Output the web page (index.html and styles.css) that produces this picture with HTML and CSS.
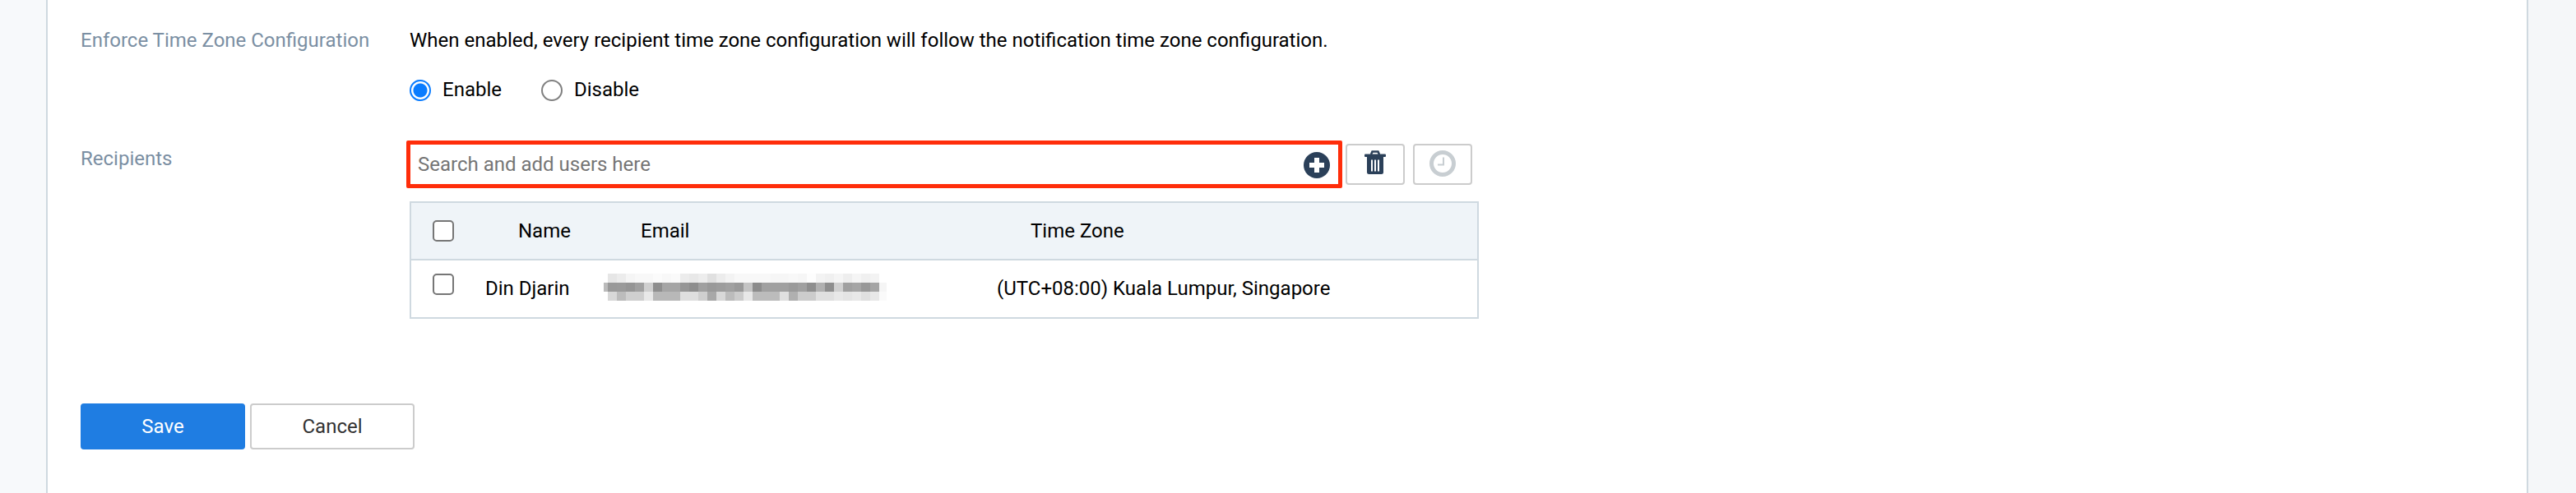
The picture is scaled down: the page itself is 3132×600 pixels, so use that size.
FILE: index.html
```html
<!DOCTYPE html>
<html lang="en">
<head>
  <meta charset="UTF-8">
  <title>Notification Recipients</title>
  <link rel="stylesheet" href="styles.css">
</head>
<body>
  <div class="side side-left"></div>
  <main class="panel">
    <div class="form-row tz-row">
      <div class="form-label">Enforce Time Zone Configuration</div>
      <div class="form-field">
        <p class="hint">When enabled, every recipient time zone configuration will follow the notification time zone configuration.</p>
        <div class="radios">
          <label class="radio-item"><input type="radio" name="enforce" checked> Enable</label>
          <label class="radio-item"><input type="radio" name="enforce"> Disable</label>
        </div>
      </div>
    </div>

    <div class="form-row recipients-row">
      <div class="form-label recipients-label">Recipients</div>
      <div class="form-field">
        <div class="search-row">
          <div class="search-box">
            <input class="search-input" type="text" placeholder="Search and add users here">
            <svg class="plus-icon" width="32" height="32" viewBox="0 0 32 32">
              <circle cx="16" cy="16" r="16" fill="#2b4059"/>
              <path d="M13 7h6v6h6v6h-6v6h-6v-6H7v-6h6z" fill="#fff"/>
            </svg>
          </div>
          <button class="icon-btn" type="button">
            <svg class="trash-icon" width="26" height="29" viewBox="0 0 26 29">
              <path d="M8 5l1.5-3.5h7L18 5" fill="none" stroke="#2b4059" stroke-width="2.6"/>
              <rect y="4.5" width="26" height="3.5" rx="1" fill="#2b4059"/>
              <path d="M3 8h20v18.500a2.500 2.500 0 0 1-2.500 2.500h-15A2.500 2.500 0 0 1 3 26.500z" fill="#2b4059"/>
              <path d="M8 11.500h2v14H8zM12 11.500h2v14h-2zM16 11.500h2v14h-2z" fill="#fff"/>
            </svg>
          </button>
          <button class="icon-btn" type="button">
            <svg class="clock-icon" width="32" height="32" viewBox="0 0 32 32">
              <circle cx="16" cy="16" r="13.500" fill="none" stroke="#c8ced2" stroke-width="5"/>
              <path d="M17 8.500v9h-7" fill="none" stroke="#c8ced2" stroke-width="2"/>
            </svg>
          </button>
        </div>

        <table class="recipients">
          <thead>
            <tr>
              <th class="col-check"><input type="checkbox"></th>
              <th class="col-name">Name</th>
              <th class="col-email">Email</th>
              <th class="col-zone">Time Zone</th>
            </tr>
          </thead>
          <tbody>
            <tr>
              <td class="col-check"><input type="checkbox"></td>
              <td class="col-name">Din Djarin</td>
              <td class="col-email">
                <!-- redacted address -->
                <svg class="redacted" width="344" height="33" viewBox="0 0 344 33" shape-rendering="crispEdges">
                  <g>
                    <rect x="5" width="11" height="11" fill="#e6e6e6"/><rect x="16" width="11" height="11" fill="#ececec"/><rect x="27" width="11" height="11" fill="#f5f5f5"/><rect x="38" width="22" height="11" fill="#f8f8f8"/><rect x="60" width="11" height="11" fill="#fbfbfb"/><rect x="71" width="11" height="11" fill="#f8f8f8"/><rect x="82" width="11" height="11" fill="#fafafa"/><rect x="93" width="11" height="11" fill="#ececec"/><rect x="104" width="11" height="11" fill="#e8e8e8"/><rect x="115" width="11" height="11" fill="#ededed"/><rect x="126" width="11" height="11" fill="#e0e0e0"/><rect x="137" width="11" height="11" fill="#ececec"/><rect x="148" width="11" height="11" fill="#f3f3f3"/><rect x="159" width="22" height="11" fill="#f8f8f8"/><rect x="181" width="22" height="11" fill="#f8f8f8"/><rect x="203" width="22" height="11" fill="#f6f6f6"/><rect x="225" width="11" height="11" fill="#f8f8f8"/><rect x="236" width="11" height="11" fill="#f6f6f6"/><rect x="247" width="11" height="11" fill="#fdfdfd"/><rect x="258" width="11" height="11" fill="#f3f3f3"/><rect x="269" width="11" height="11" fill="#f0f0f0"/><rect x="280" width="11" height="11" fill="#f5f5f5"/><rect x="291" width="11" height="11" fill="#eeeeee"/><rect x="302" width="11" height="11" fill="#f5f5f5"/><rect x="313" width="11" height="11" fill="#f0f0f0"/><rect x="324" width="11" height="11" fill="#f3f3f3"/>
                  </g>
                  <g>
                    <rect y="11" width="5" height="11" fill="#bbbbbb"/><rect x="5" y="11" width="11" height="11" fill="#999999"/><rect x="16" y="11" width="11" height="11" fill="#9a9a9a"/><rect x="27" y="11" width="11" height="11" fill="#959595"/><rect x="38" y="11" width="11" height="11" fill="#a0a0a0"/><rect x="49" y="11" width="11" height="11" fill="#cfcfcf"/><rect x="60" y="11" width="11" height="11" fill="#8e8e8e"/><rect x="71" y="11" width="22" height="11" fill="#a5a5a5"/><rect x="93" y="11" width="11" height="11" fill="#969696"/><rect x="104" y="11" width="11" height="11" fill="#8e8e8e"/><rect x="115" y="11" width="11" height="11" fill="#a0a0a0"/><rect x="126" y="11" width="11" height="11" fill="#999999"/><rect x="137" y="11" width="11" height="11" fill="#9c9c9c"/><rect x="148" y="11" width="11" height="11" fill="#a0a0a0"/><rect x="159" y="11" width="11" height="11" fill="#999999"/><rect x="170" y="11" width="11" height="11" fill="#c4c4c4"/><rect x="181" y="11" width="11" height="11" fill="#8c8c8c"/><rect x="192" y="11" width="33" height="11" fill="#a0a0a0"/><rect x="225" y="11" width="11" height="11" fill="#9a9a9a"/><rect x="236" y="11" width="11" height="11" fill="#a0a0a0"/><rect x="247" y="11" width="11" height="11" fill="#8e8e8e"/><rect x="258" y="11" width="11" height="11" fill="#b0b0b0"/><rect x="269" y="11" width="11" height="11" fill="#8e8e8e"/><rect x="280" y="11" width="11" height="11" fill="#d0d0d0"/><rect x="291" y="11" width="11" height="11" fill="#a0a0a0"/><rect x="302" y="11" width="11" height="11" fill="#a5a5a5"/><rect x="313" y="11" width="11" height="11" fill="#989898"/><rect x="324" y="11" width="11" height="11" fill="#a5a5a5"/><rect x="335" y="11" width="9" height="11" fill="#f5f5f5"/>
                  </g>
                  <g>
                    <rect x="5" y="22" width="11" height="11" fill="#d8d8d8"/><rect x="16" y="22" width="11" height="11" fill="#bcbcbc"/><rect x="27" y="22" width="22" height="11" fill="#cfcfcf"/><rect x="49" y="22" width="11" height="11" fill="#e8e8e8"/><rect x="60" y="22" width="33" height="11" fill="#b8b8b8"/><rect x="93" y="22" width="22" height="11" fill="#dfdfdf"/><rect x="115" y="22" width="11" height="11" fill="#cfcfcf"/><rect x="126" y="22" width="11" height="11" fill="#a8a8a8"/><rect x="137" y="22" width="11" height="11" fill="#d8d8d8"/><rect x="148" y="22" width="11" height="11" fill="#bcbcbc"/><rect x="159" y="22" width="11" height="11" fill="#cccccc"/><rect x="170" y="22" width="11" height="11" fill="#e8e8e8"/><rect x="181" y="22" width="33" height="11" fill="#bcbcbc"/><rect x="214" y="22" width="11" height="11" fill="#e0e0e0"/><rect x="225" y="22" width="11" height="11" fill="#b0b0b0"/><rect x="236" y="22" width="22" height="11" fill="#cccccc"/><rect x="258" y="22" width="22" height="11" fill="#e0e0e0"/><rect x="280" y="22" width="11" height="11" fill="#e8e8e8"/><rect x="291" y="22" width="11" height="11" fill="#e4e4e4"/><rect x="302" y="22" width="11" height="11" fill="#e8e8e8"/><rect x="313" y="22" width="11" height="11" fill="#e0e0e0"/><rect x="324" y="22" width="11" height="11" fill="#e8e8e8"/><rect x="335" y="22" width="9" height="11" fill="#fafafa"/>
                  </g>
                </svg>
              </td>
              <td class="col-zone">(UTC+08:00) Kuala Lumpur, Singapore</td>
            </tr>
          </tbody>
        </table>
      </div>
    </div>

    <div class="actions">
      <button class="btn btn-primary" type="button">Save</button>
      <button class="btn" type="button">Cancel</button>
    </div>
  </main>
  <div class="side side-right"></div>
</body>
</html>
```

FILE: styles.css
```css
html, body {
  margin: 0;
  height: 600px;
  overflow: hidden;
}
body {
  display: flex;
  font-family: Roboto, "Liberation Sans", sans-serif;
  font-size: 24px;
  color: #000;
  background: #f7f9fb;
}
.side-left {
  width: 56px;
}
.side-right {
  flex: 1;
  background: #f5f7f9;
}
.panel {
  box-sizing: border-box;
  width: 3018px;
  height: 600px;
  padding: 33px 0 0 40px;
  background: #fff;
  border-left: 2px solid #cfd9e0;
  border-right: 2px solid #cfd9e0;
}
.form-row {
  display: flex;
}
.form-label {
  width: 400px;
  flex: none;
  line-height: 32px;
  color: #7b8fa3;
}
.hint {
  margin: 0;
  line-height: 32px;
}
.radios {
  display: flex;
  gap: 34px;
  margin-top: 28px;
  height: 32px;
}
.radio-item {
  display: flex;
  align-items: center;
  gap: 14px;
  width: 126px;
}
input[type="radio"] {
  appearance: none;
  box-sizing: border-box;
  flex: none;
  width: 26px;
  height: 26px;
  margin: 2px 0 0;
  border: 2px solid #808080;
  border-radius: 50%;
  background: #fff;
}
input[type="radio"]:checked {
  border-color: #0a7cff;
  background: radial-gradient(circle, #0a7cff 0 8px, #fff 9px);
}
input[type="checkbox"] {
  appearance: none;
  display: block;
  box-sizing: border-box;
  width: 26px;
  height: 26px;
  margin: 0;
  border: 2px solid #767676;
  border-radius: 5px;
  background: #fff;
}
.recipients-row {
  margin-top: 46px;
}
.recipients-label {
  margin-top: 6px;
}
.search-row {
  display: flex;
  align-items: center;
  margin-left: -4px;
}
.search-box {
  box-sizing: border-box;
  display: flex;
  align-items: center;
  width: 1138px;
  height: 58px;
  padding: 0 10px 0 9px;
  border: 5px solid #ff2d0a;
  border-radius: 2px;
}
.search-input {
  flex: 1;
  border: none;
  outline: none;
  padding: 0;
  font: inherit;
  color: #000;
}
.search-input::placeholder {
  color: #757575;
  opacity: 1;
}
.plus-icon {
  margin-top: 2px;
}
.trash-icon {
  margin-bottom: 5px;
}
.clock-icon {
  margin-bottom: 2px;
}
.icon-btn {
  box-sizing: border-box;
  display: flex;
  align-items: center;
  justify-content: center;
  width: 72px;
  height: 50px;
  margin-left: 10px;
  padding: 0;
  background: #fff;
  border: 2px solid #ccc;
  border-radius: 4px;
}
.search-box + .icon-btn {
  margin-left: 4px;
}
.recipients {
  box-sizing: border-box;
  width: 1300px;
  margin-top: 16px;
  border-collapse: separate;
  border-spacing: 0;
  table-layout: fixed;
  border: 2px solid #cfd9e0;
}
.recipients th,
.recipients td {
  box-sizing: border-box;
  padding: 0;
}
.recipients th {
  height: 70px;
  background: #eff4f8;
  font-weight: 400;
  text-align: left;
  border-bottom: 2px solid #cfd9e0;
}
.recipients td {
  height: 69px;
  padding-bottom: 2px;
}
.recipients .col-check {
  width: 90px;
  padding-left: 26px;
}
.recipients td.col-check {
  vertical-align: top;
  padding-top: 16px;
}
.recipients .col-name {
  width: 144px;
}
.recipients th.col-name {
  padding-left: 40px;
}
.recipients .col-email {
  width: 478px;
}
.recipients th.col-email {
  padding-left: 45px;
}
.recipients th.col-zone {
  padding-left: 41px;
}
.redacted {
  display: block;
  margin-top: -2px;
  filter: blur(0.6px);
}
.actions {
  display: flex;
  gap: 6px;
  margin-top: 103px;
}
.btn {
  box-sizing: border-box;
  width: 200px;
  height: 56px;
  padding: 0;
  font: inherit;
  color: #333;
  background: #fff;
  border: 2px solid #ccc;
  border-radius: 4px;
}
.btn-primary {
  color: #fff;
  background: #1f7de2;
  border-color: #1f7de2;
}
```
